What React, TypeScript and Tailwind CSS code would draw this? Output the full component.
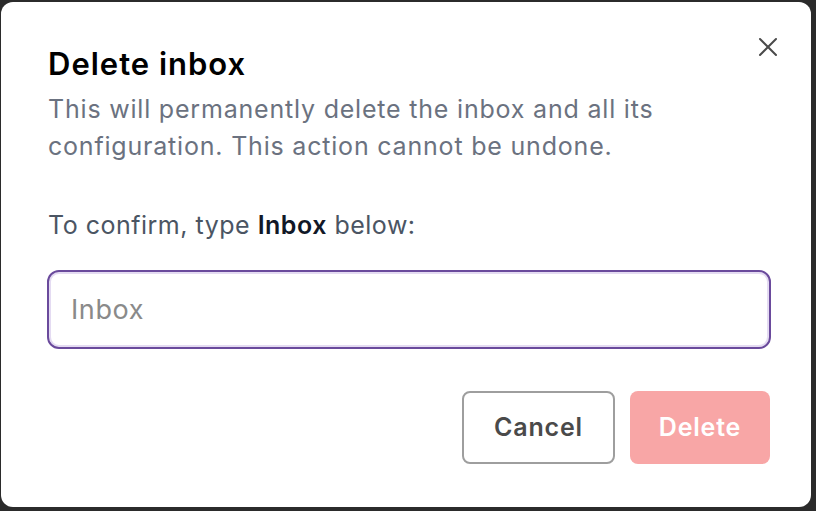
import React, { useState } from 'react';

const CloseIcon = () => (
    <svg width="20" height="20" viewBox="0 0 20 20" fill="none" stroke="currentColor" strokeWidth="2" strokeLinecap="round">
        <path d="M2 2L18 18M18 2L2 18" />
    </svg>
);

export default function App() {
    const [value, setValue] = useState('');
    const canDelete = value === 'Inbox';

    return (
        <div className="h-[511px] w-[816px] bg-[#2b2b2b] pt-[2px] pl-[1px] pr-[5px] pb-[4px]" style={{ fontFamily: 'Inter, "Noto Sans", sans-serif' }}>
            <div className="relative h-full w-full rounded-[12px] bg-white pl-[47px] pr-[41px] pt-[44px]" role="dialog" aria-modal="true" aria-labelledby="delete-title">
                <button className="absolute right-[33px] top-[35px] text-[#4a4a4a]" aria-label="Close">
                    <CloseIcon />
                </button>
                <h2 id="delete-title" className="text-[31px] font-semibold leading-[36px] tracking-[1px] text-black">Delete inbox</h2>
                <p className="mt-[9px] text-[25px] leading-[37px] tracking-[0.8px] text-[#6b7280]">
                    This will permanently delete the inbox and all its
                    <br />
                    configuration. This action cannot be undone.
                </p>
                <p className="mt-[42px] text-[25px] leading-[37px] tracking-[0.5px] text-[#4b5563]">
                    To confirm, type <span className="font-semibold text-[#111827]">Inbox</span> below:
                </p>
                <input
                    value={value}
                    onChange={(e) => setValue(e.target.value)}
                    placeholder="Inbox"
                    className="-ml-[1px] mt-[26px] block h-[79px] w-[724px] rounded-[12px] border-2 border-[#6a4a9c] px-[22px] text-[27px] tracking-[0.6px] text-[#111827] shadow-[inset_0_0_0_2px_#e4dbf2] outline-none placeholder:text-[#8a8a8a]"
                />
                <div className="mt-[42px] flex justify-end gap-[15px]">
                    <button className="h-[73px] w-[153px] rounded-[8px] border-2 border-[#9e9e9e] text-[25px] font-semibold tracking-[0.8px] text-[#4a4a4a]">
                        Cancel
                    </button>
                    <button
                        disabled={!canDelete}
                        className={canDelete
                            ? 'h-[73px] w-[140px] rounded-[8px] bg-[#ef4444] text-[25px] font-semibold tracking-[0.8px] text-white'
                            : 'h-[73px] w-[140px] rounded-[8px] bg-[#f8a6a6] text-[25px] font-semibold tracking-[0.8px] text-white'}
                    >
                        Delete
                    </button>
                </div>
            </div>
        </div>
    );
}
